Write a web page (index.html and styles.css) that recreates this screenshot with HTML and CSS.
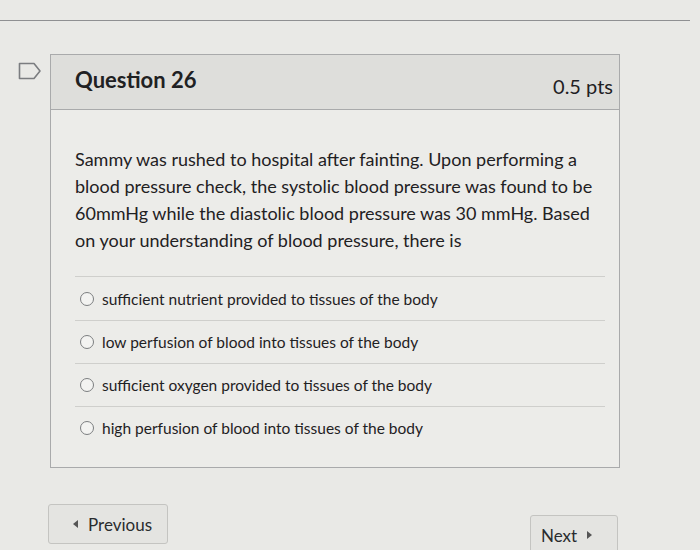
FILE: index.html
```html
<!DOCTYPE html>
<html>
<head>
<meta charset="utf-8">
<link rel="stylesheet" href="styles.css">
</head>
<body>
<div class="page">
  <div class="topline"></div>
  <div class="question-row">
    <div class="flag">
      <svg width="24" height="18" viewBox="0 0 24 18"><path d="M1.5 1.5 H16 L22 9 L16 16.5 H1.5 Z" fill="none" stroke="#7b7d80" stroke-width="1.6" stroke-linejoin="round"/></svg>
    </div>
    <div class="card">
      <div class="card-header">
        <span class="q-title">Question 26</span>
        <span class="q-pts">0.5 pts</span>
      </div>
      <div class="card-body">
        <p class="q-text">Sammy was rushed to hospital after fainting. Upon performing a blood pressure check, the systolic blood pressure was found to be 60mmHg while the diastolic blood pressure was 30 mmHg. Based on your understanding of blood pressure, there is</p>
        <div class="answers">
          <label class="answer"><span class="radio"></span>sufficient nutrient provided to tissues of the body</label>
          <label class="answer"><span class="radio"></span>low perfusion of blood into tissues of the body</label>
          <label class="answer"><span class="radio"></span>sufficient oxygen provided to tissues of the body</label>
          <label class="answer"><span class="radio"></span>high perfusion of blood into tissues of the body</label>
        </div>
      </div>
    </div>
  </div>
  <div class="nav">
    <button class="btn btn-prev"><span class="tri tri-left"></span>Previous</button>
    <button class="btn btn-next">Next<span class="tri tri-right"></span></button>
  </div>
</div>
</body>
</html>
```
FILE: styles.css
```css
html, body {
  margin: 0;
  padding: 0;
  background: #e9e9e6;
  font-family: Lato, "Open Sans", sans-serif;
  color: #1f2123;
}
.page {
  width: 700px;
  height: 550px;
  overflow: hidden;
  padding-top: 20px;
  box-sizing: border-box;
}
.topline {
  width: 690px;
  border-top: 1px solid #8f9092;
}
.question-row {
  display: flex;
  align-items: flex-start;
  margin-top: 33px;
}
.flag {
  width: 50px;
  padding: 8px 0 0 18px;
  box-sizing: border-box;
}
.flag svg { display: block; }
.card {
  width: 568px;
  border: 1px solid #a9aaab;
  background: #ecece9;
}
.card-header {
  height: 54px;
  background: #dededb;
  border-bottom: 1px solid #a9aaab;
  display: flex;
  justify-content: space-between;
  align-items: center;
  padding: 0 6px 0 24px;
}
.q-title {
  font-weight: 700;
  font-size: 22px;
  margin-top: -6px;
}
.q-pts {
  font-size: 20px;
  margin-top: 8px;
}
.card-body {
  padding: 36px 14px 18px 24px;
}
.q-text {
  margin: 0;
  font-size: 18px;
  line-height: 27px;
  padding-right: 4px;
}
.answers {
  margin-top: 22px;
  border-top: 1px solid #cfcfcc;
}
.answer {
  display: flex;
  align-items: center;
  height: 43px;
  font-size: 15.5px;
  padding-left: 5px;
  box-sizing: border-box;
}
.answer + .answer {
  border-top: 1px solid #cfcfcc;
}
.radio {
  width: 12px;
  height: 12px;
  border: 1px solid #7c7e80;
  border-radius: 50%;
  background: #f3f3f1;
  margin-right: 8px;
}
.nav {
  display: flex;
  justify-content: space-between;
  align-items: flex-start;
  width: 570px;
  margin: 36px 0 0 48px;
}
.btn {
  font-family: Lato, "Open Sans", sans-serif;
  font-size: 17px;
  color: #2a2c2e;
  background: #e4e4e1;
  border: 1px solid #c4c4c1;
  border-radius: 3px;
  display: flex;
  align-items: center;
  height: 40px;
}
.btn-prev {
  width: 120px;
  padding: 0 0 0 24px;
}
.btn-next {
  width: 88px;
  padding: 0 0 0 10px;
  margin-top: 11px;
}
.tri {
  width: 0;
  height: 0;
  border-top: 4px solid transparent;
  border-bottom: 4px solid transparent;
}
.tri-left {
  border-right: 5px solid #555;
  margin-right: 10px;
}
.tri-right {
  border-left: 5px solid #555;
  margin-left: 10px;
}
```
